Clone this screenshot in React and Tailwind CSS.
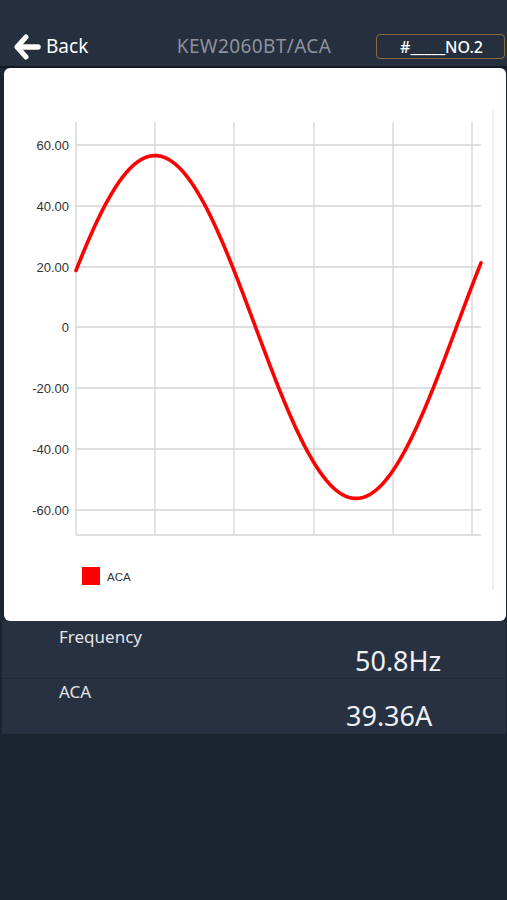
import React from "react";

function Curve() {
  const pts = [];
  for (let x = 76; x <= 481; x += 1) {
    const phi = Math.PI / 2 + ((x - 155) * 2 * Math.PI) / 402;
    const v = 56.2 * Math.sin(phi);
    const y = 327 - (v * 61) / 20;
    pts.push(`${x},${y.toFixed(2)}`);
  }
  return (
    <polyline
      points={pts.join(" ")}
      fill="none"
      stroke="#ff0000"
      strokeWidth="3.6"
      strokeLinejoin="round"
      strokeLinecap="round"
    />
  );
}

function Chart() {
  const vx = [76, 155, 234, 314, 393, 472];
  const hy = [
    [145, "60.00"],
    [206, "40.00"],
    [267, "20.00"],
    [327, "0"],
    [388, "-20.00"],
    [449, "-40.00"],
    [510, "-60.00"],
  ];
  return (
    <svg width="502" height="553" viewBox="4 68 502 553" className="block">
      {vx.map((x) => (
        <line key={x} x1={x} y1="122" x2={x} y2="535" stroke="#d4d4d4" strokeWidth="1.3" />
      ))}
      {hy.map(([y]) => (
        <line key={y} x1="76" y1={y} x2="481" y2={y} stroke="#d4d4d4" strokeWidth="1.3" />
      ))}
      <line x1="76" y1="535" x2="481" y2="535" stroke="#d4d4d4" strokeWidth="1.3" />
      <line x1="493" y1="110" x2="493" y2="590" stroke="#e6e6e6" strokeWidth="1.2" />
      {hy.map(([y, t]) => (
        <text
          key={t}
          x="69"
          y={y + 4.5}
          textAnchor="end"
          fontFamily="'Liberation Sans', Arial, sans-serif"
          fontSize="13"
          fill="#333333"
        >
          {t}
        </text>
      ))}
      <Curve />
      <rect x="82" y="567" width="18" height="18" fill="#ff0000" />
      <text
        x="107"
        y="580.5"
        fontFamily="'Liberation Sans', Arial, sans-serif"
        fontSize="11.5"
        fill="#333333"
      >
        ACA
      </text>
    </svg>
  );
}

function BackArrow() {
  return (
    <svg width="27" height="26" viewBox="0 0 27 26" fill="none">
      <path
        d="M12 3 L3 13 L12 23"
        stroke="#ffffff"
        strokeWidth="5"
        strokeLinecap="round"
        strokeLinejoin="round"
      />
      <path d="M4.5 13 H24" stroke="#ffffff" strokeWidth="5.5" strokeLinecap="round" />
    </svg>
  );
}

export default function App() {
  return (
    <div
      className="w-[507px] h-[900px] bg-[#1d2431] overflow-hidden"
      style={{ fontFamily: "'Noto Sans', 'Open Sans', sans-serif" }}
    >
      <div className="h-[68px] bg-[#262f3e] border-b-2 border-[#151b26] flex items-start pt-[34px] relative">
        <div className="flex items-center h-[25px] pl-[14px]">
          <BackArrow />
          <span className="ml-[5px] text-white text-[19px] leading-none">Back</span>
        </div>
        <div className="absolute left-0 right-0 top-[34px] h-[25px] flex items-center justify-center pointer-events-none">
          <span className="text-[#8d929b] text-[19px] leading-none tracking-[0.4px] ml-[1px]">
            KEW2060BT/ACA
          </span>
        </div>
        <div className="ml-auto mr-[2px] w-[129px] h-[25px] border-[1.5px] border-[#8a6a3e] rounded-[4px] flex items-center justify-center">
          <span className="text-white text-[16px] leading-none font-medium ml-[2px]">#_____NO.2</span>
        </div>
      </div>
      <div className="ml-[4px] w-[502px] h-[553px] bg-white rounded-[6px] overflow-hidden">
        <Chart />
      </div>
      <div className="ml-[2px] w-[504px] bg-[#283142]">
        <div className="h-[58px] relative border-b border-[#222a38]">
          <div className="absolute left-[57px] top-[7px] text-[#e2e4e8] text-[17px] leading-none">
            Frequency
          </div>
          <div className="absolute left-[353px] top-[26px] text-[#eef0f3] text-[27px] leading-none">
            50.8Hz
          </div>
        </div>
        <div className="h-[55px] relative">
          <div className="absolute left-[57px] top-[4px] text-[#e2e4e8] text-[17px] leading-none">
            ACA
          </div>
          <div className="absolute left-[344px] top-[23px] text-[#eef0f3] text-[27px] leading-none">
            39.36A
          </div>
        </div>
      </div>
    </div>
  );
}
